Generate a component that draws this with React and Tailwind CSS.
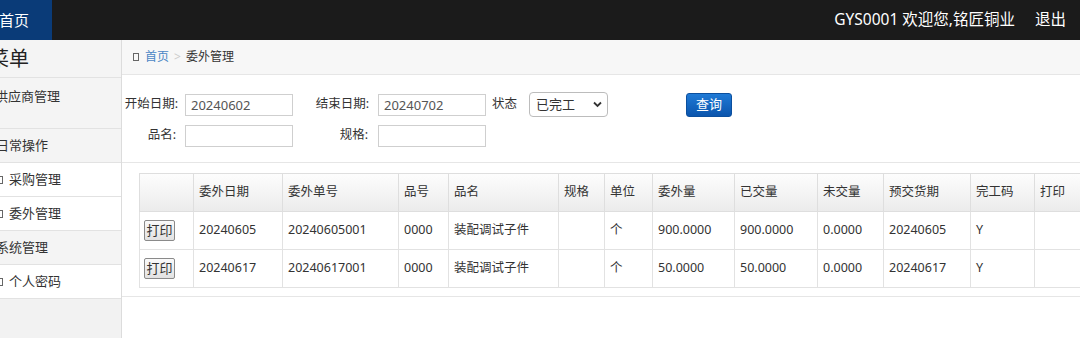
import { useState } from "react";

const FONT = { fontFamily: '"Noto Sans", "Noto Sans CJK SC", sans-serif' };

const cols = [
  { key: "btn", title: "", w: 54 },
  { key: "date", title: "委外日期", w: 89 },
  { key: "no", title: "委外单号", w: 116 },
  { key: "pno", title: "品号", w: 50 },
  { key: "pname", title: "品名", w: 110 },
  { key: "spec", title: "规格", w: 46 },
  { key: "unit", title: "单位", w: 48 },
  { key: "qty", title: "委外量", w: 82 },
  { key: "done", title: "已交量", w: 83 },
  { key: "left", title: "未交量", w: 66 },
  { key: "due", title: "预交货期", w: 87 },
  { key: "code", title: "完工码", w: 64 },
  { key: "print", title: "打印", w: 90 },
];

const rows = [
  { date: "20240605", no: "20240605001", pno: "0000", pname: "装配调试子件", spec: "", unit: "个", qty: "900.0000", done: "900.0000", left: "0.0000", due: "20240605", code: "Y", print: "" },
  { date: "20240617", no: "20240617001", pno: "0000", pname: "装配调试子件", spec: "", unit: "个", qty: "50.0000", done: "50.0000", left: "0.0000", due: "20240617", code: "Y", print: "" },
];

function Square() {
  return <span className="inline-block w-[6px] h-[8px] border border-[#666] shrink-0" />;
}

function SideHead({ children, h = 34, shift = -4, pt }) {
  return (
    <div className="border-b border-[#e2e2e2] bg-[#f4f4f4] text-[13px] text-[#333] overflow-hidden" style={{ height: h }}>
      <div className={`flex ${pt ? "items-start pt-[9px]" : "items-center h-full"}`} style={{ marginLeft: shift }}>
        {children}
      </div>
    </div>
  );
}

function SideItem({ children }) {
  return (
    <div className="h-[34px] border-b border-[#e2e2e2] bg-white text-[13px] text-[#333] flex items-center overflow-hidden">
      <div className="flex items-center gap-[6px] ml-[-3px]">
        <Square />
        <span>{children}</span>
      </div>
    </div>
  );
}

function TextInput({ value }) {
  return (
    <input
      readOnly
      value={value}
      className="w-[108px] h-[22px] border border-[#cfcfcf] px-[5px] text-[13px] text-[#555] outline-none"
    />
  );
}

export default function App() {
  const [status, setStatus] = useState("已完工");

  return (
    <div className="w-[1080px] h-[338px] overflow-hidden bg-white flex flex-col text-[#333]" style={FONT}>
      <div className="h-10 shrink-0 bg-[#1b1b1b] flex items-center justify-between">
        <div className="w-[52px] h-full bg-[#0a3b78] flex items-center text-white text-[15px] overflow-hidden">
          <span className="ml-[-1px]">首页</span>
        </div>
        <div className="flex items-center text-white text-[15.5px] pr-[14px]">
          <span>GYS0001 欢迎您,铭匠铜业</span>
          <span className="ml-[20px]">退出</span>
        </div>
      </div>

      <div className="flex flex-1 min-h-0">
        <div className="w-[122px] shrink-0 bg-[#f2f2f2] border-r border-[#dcdcdc] overflow-hidden">
          <div className="h-[38px] border-b border-[#e2e2e2] bg-[#f4f4f4] flex items-center overflow-hidden">
            <span className="ml-[-11px] text-[20px] text-[#222]">菜单</span>
          </div>
          <SideHead h={51} shift={-5} pt>供应商管理</SideHead>
          <SideHead>日常操作</SideHead>
          <SideItem>采购管理</SideItem>
          <SideItem>委外管理</SideItem>
          <SideHead>系统管理</SideHead>
          <SideItem>个人密码</SideItem>
        </div>

        <div className="flex-1 min-w-0 overflow-hidden">
          <div className="h-[35px] bg-[#f7f7f7] border-b border-[#e6e6e6] flex items-center pl-[11px] text-[12px]">
            <Square />
            <span className="ml-[6px] text-[#4a86c5]">首页</span>
            <span className="mx-[5px] text-[#cccccc]">&gt;</span>
            <span className="text-[#333]">委外管理</span>
          </div>

          <div className="border-b border-[#e6e6e6] pt-[18px] pb-[15px] text-[12.5px]">
            <div className="flex items-center h-[23px]">
              <span className="w-[56px] text-right">开始日期:</span>
              <span className="ml-[7px]"><TextInput value="20240602" /></span>
              <span className="w-[76px] text-right">结束日期:</span>
              <span className="ml-[9px]"><TextInput value="20240702" /></span>
              <span className="ml-[6px]">状态</span>
              <div className="ml-[12px] relative w-[79px] h-[25px]">
                <select
                  value={status}
                  onChange={(e) => setStatus(e.target.value)}
                  className="appearance-none w-full h-full border border-[#bcbcbc] rounded-[4px] bg-white pl-[6px] text-[13px] text-[#333] outline-none"
                >
                  <option>已完工</option>
                  <option>未完工</option>
                  <option>全部</option>
                </select>
                <svg className="absolute right-[6px] top-[9px] pointer-events-none" width="9" height="7" viewBox="0 0 9 7">
                  <path d="M1 1.5 L4.5 5 L8 1.5" fill="none" stroke="#333" strokeWidth="1.8" />
                </svg>
              </div>
              <button className="ml-[78px] w-[46px] h-[24px] rounded-[3px] bg-gradient-to-b from-[#1f7ad6] to-[#0b55ad] text-white text-[13px] border border-[#0b4f9e]">
                查询
              </button>
            </div>
            <div className="flex items-center h-[23px] mt-[8px]">
              <span className="w-[54px] text-right">品名:</span>
              <span className="ml-[9px]"><TextInput value="" /></span>
              <span className="w-[75px] text-right">规格:</span>
              <span className="ml-[10px]"><TextInput value="" /></span>
            </div>
          </div>

          <div className="border-b border-[#e6e6e6] pt-[10px] pb-[8px] pl-[17px]">
            <table className="table-fixed border-collapse text-[12.5px] text-[#333]" style={{ width: 985 }}>
              <colgroup>
                {cols.map((c) => <col key={c.key} style={{ width: c.w }} />)}
              </colgroup>
              <thead>
                <tr className="h-[38px] bg-gradient-to-b from-[#fdfdfd] to-[#ebebeb]">
                  {cols.map((c) => (
                    <th key={c.key} className="border border-[#dedede] text-left font-normal px-[5px]">{c.title}</th>
                  ))}
                </tr>
              </thead>
              <tbody>
                {rows.map((r) => (
                  <tr key={r.no} className="h-[38px] bg-white">
                    <td className="border border-[#e2e2e2] px-[4px]">
                      <button className="h-[21px] w-[31px] border border-[#8a8a8a] rounded-[2px] bg-gradient-to-b from-[#fafafa] to-[#e2e2e2] text-[13px] leading-none text-[#333]">
                        打印
                      </button>
                    </td>
                    {cols.slice(1).map((c) => (
                      <td key={c.key} className="border border-[#e2e2e2] px-[5px] whitespace-nowrap">{r[c.key]}</td>
                    ))}
                  </tr>
                ))}
              </tbody>
            </table>
          </div>
        </div>
      </div>
    </div>
  );
}
